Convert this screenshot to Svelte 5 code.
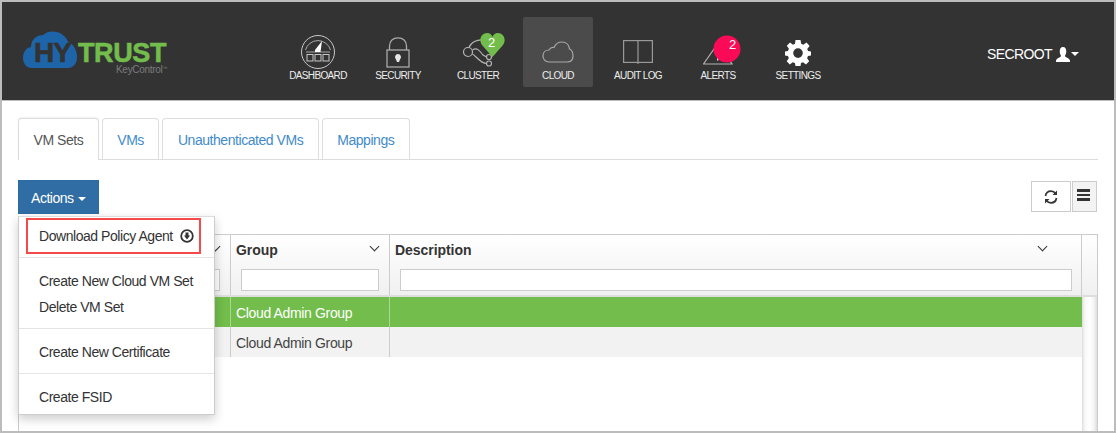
<script lang="ts">
  const navItems = [
    { id: 'dashboard', label: 'DASHBOARD' },
    { id: 'security', label: 'SECURITY' },
    { id: 'cluster', label: 'CLUSTER' },
    { id: 'cloud', label: 'CLOUD' },
    { id: 'audit', label: 'AUDIT LOG' },
    { id: 'alerts', label: 'ALERTS' },
    { id: 'settings', label: 'SETTINGS' }
  ];
  const tabs = ['VM Sets', 'VMs', 'Unauthenticated VMs', 'Mappings'];
  const rows = [
    { group: 'Cloud Admin Group', selected: true },
    { group: 'Cloud Admin Group', selected: false }
  ];
</script>

<div class="frame">
  <header class="top">
    <div class="logo">
      <svg class="cloud" width="55" height="38" viewBox="0 0 55 38" aria-hidden="true">
        <path d="M9 37C3 37 0 32 0 27C0 21 3 17 8 16C8 8 14 4 20 4C24 0 30 0 34 1C40 3 44 7 45 11C51 13 54 20 54 26C54 33 50 37 45 37Z" fill="#1e64a8" />
      </svg>
      <span class="hy">HY</span>
      <span class="trust">TRUST</span>
      <span class="key">KeyControl<sup>™</sup></span>
    </div>

    <nav class="nav">
      {#each navItems as item}
        <div class="nav-item" class:active={item.id === 'cloud'}>
          <div class="nav-icon">
            {#if item.id === 'dashboard'}
              <svg class="i-dashboard" width="34" height="34" viewBox="0 0 34 34" fill="none" stroke="#c8c8c8">
                <circle cx="17" cy="17" r="16.500" />
                <path d="M5 17H29" stroke-width="0.8" />
                <path d="M4.500 15A13 13 0 0 1 29.500 15" stroke-width="0.8" />
                <path d="M14 15L21 6L19.500 17H14Z" fill="#fff" stroke="none" />
                <rect x="6" y="19.500" width="6" height="6.500" />
                <rect x="14" y="19.500" width="6" height="6.500" />
                <rect x="22" y="19.500" width="6" height="6.500" />
              </svg>
            {:else if item.id === 'security'}
              <svg class="i-security" width="24" height="31" viewBox="0 0 24 31" fill="none" stroke="#aaa" stroke-width="1.300">
                <path d="M3.500 13V9C3.500 4 7 0.800 12 0.800C17 0.800 20.500 4 20.500 9V13" />
                <rect x="1" y="13" width="22" height="17" />
                <path d="M12 17A3.200 3.200 0 0 1 14 22.500L13 25H11L10 22.500A3.200 3.200 0 0 1 12 17Z" fill="#e6e6e6" stroke="none" />
              </svg>
            {:else if item.id === 'cluster'}
              <svg class="i-cluster" width="42" height="35" viewBox="0 0 42 35" fill="none" stroke="#b4b4b4" stroke-width="1.200">
                <circle cx="5" cy="19" r="4.500" />
                <path d="M6 14.500C8 9 14 6.500 20 7M9.500 17C14 14 17 18 20 22L23.500 24M9.500 21C13 23 17 30 23.500 30.500" />
                <circle cx="26" cy="24" r="2.500" />
                <circle cx="26" cy="30.500" r="2.500" />
                <path d="M29.500 24L19 12C15 6 19 0 24 0C27 0 29 2 29.500 4C30 2 32 0 35 0C40 0 44 6 40 12Z" fill="#72bd4b" stroke="none" />
              </svg>
              <span class="count heart-count">2</span>
            {:else if item.id === 'cloud'}
              <svg class="i-cloud" width="32" height="22" viewBox="0 0 32 22" fill="none" stroke="#a8a8a8" stroke-width="1.200">
                <path d="M7 21C3 21 1 18 1 15C1 11 4 9 7 9C8.500 6.500 10.500 6 12 6.500C13.500 3 16.500 1 20 1C24 1 27 4 27.500 8C30 9 31 12 31 15C31 18.500 29 21 25 21Z" />
              </svg>
            {:else if item.id === 'audit'}
              <svg class="i-audit" width="30" height="24" viewBox="0 0 30 24" fill="none" stroke="#999" stroke-width="1.200">
                <rect x="0.600" y="0.600" width="28.800" height="21.800" />
                <path d="M15 0.600V24" />
              </svg>
            {:else if item.id === 'alerts'}
              <svg class="i-alerts" width="38" height="30" viewBox="0 0 38 30" fill="none">
                <path d="M0.500 29L14.500 9L29 29Z" stroke="#b4b4b4" stroke-width="1.200" />
                <rect x="14" y="23" width="1.500" height="2.500" fill="#ddd" />
                <circle cx="24" cy="14" r="13.500" fill="#fb0a57" />
              </svg>
              <span class="count alert-count">2</span>
            {:else}
              <svg class="i-settings" width="26" height="26" viewBox="0 0 26 26">
                <path fill="#fff" fill-rule="evenodd" d="M10.500 0H15.500L16.200 3.800L18.300 4.700L21.500 2.500L24.600 5.900L22.200 8.900L23.100 11L26 11.500V15.500L23 16.100L22.100 18.200L24.200 21.300L21 24.400L18 22.300L16 23.100L15.500 26H10.500L9.900 23.100L7.800 22.200L4.800 24.400L1.700 21.200L3.800 18.200L3 16L0 15.500V11.500L3 10.900L3.900 8.800L1.800 5.700L5 2.500L8 4.700L10 3.800ZM13 8.300A4.800 4.800 0 1 0 13 17.900A4.800 4.800 0 1 0 13 8.300Z" />
              </svg>
            {/if}
          </div>
          <span class="nav-label">{item.label}</span>
        </div>
      {/each}
    </nav>

    <div class="user">
      <span>SECROOT</span>
      <svg width="14" height="15" viewBox="0 0 15 15" preserveAspectRatio="none" aria-hidden="true">
        <path fill="#fff" d="M7.500 0C10 0 11 2 11 4.500C11 6.500 10 8 9.500 9C10 10.500 15 11 15 14V15H0V14C0 11 5 10.500 5.500 9C5 8 4 6.500 4 4.500C4 2 5 0 7.500 0Z" />
      </svg>
      <span class="caret white"></span>
    </div>
  </header>

  <main class="content">
    <div class="tabs">
      {#each tabs as tab, i}
        <div class="tab" class:current={i === 0}>{tab}</div>
      {/each}
    </div>

    <div class="toolbar">
      <button class="actions">Actions <span class="caret white"></span></button>
      <div class="tools">
        <button class="refresh" aria-label="Refresh">
          <svg width="14" height="14" viewBox="0 0 14 14" fill="none" stroke="#333" stroke-width="1.700">
            <path d="M1.500 6C2 3 4.500 1.200 7 1.200C9 1.200 10.500 2 11.500 3.500" />
            <path d="M12.500 8C12 11 9.500 12.800 7 12.800C5 12.800 3.500 12 2.500 10.500" />
            <path d="M13 0.500V5H8.500Z" fill="#333" stroke="none" />
            <path d="M1 13.500V9H5.500Z" fill="#333" stroke="none" />
          </svg>
        </button>
        <button class="menu" aria-label="Columns">
          <span></span><span></span><span></span>
        </button>
      </div>
    </div>

    <div class="table-wrap">
      <div class="table">
        <div class="head-row">
          <div class="col first">
            <div class="col-title"><span>Name</span><span class="chev"></span></div>
            <div class="filter"></div>
          </div>
          <div class="col group">
            <div class="col-title"><span>Group</span><span class="chev"></span></div>
            <div class="filter"></div>
          </div>
          <div class="col desc">
            <div class="col-title"><span>Description</span><span class="chev"></span></div>
            <div class="filter"></div>
          </div>
          <div class="col end"></div>
        </div>
        {#each rows as row}
          <div class="row" class:selected={row.selected}>
            <div class="cell first"></div>
            <div class="cell group">{row.group}</div>
            <div class="cell desc"></div>
          </div>
        {/each}
        <div class="scroll-track"></div>
      </div>

      <div class="dropdown">
        <div class="drop-group first-group">
          <div class="highlight">
            <span>Download Policy Agent</span>
            <svg width="14" height="14" viewBox="0 0 14 14" aria-hidden="true">
              <circle cx="7" cy="7" r="5.800" fill="none" stroke="#333" stroke-width="1.800" />
              <path d="M5.500 3.500H8.500V6.500H10L7 10.500L4 6.500H5.500Z" fill="#333" />
            </svg>
          </div>
        </div>
        <div class="drop-group">
          <div class="drop-item">Create New Cloud VM Set</div>
          <div class="drop-item">Delete VM Set</div>
        </div>
        <div class="drop-group">
          <div class="drop-item">Create New Certificate</div>
        </div>
        <div class="drop-group last">
          <div class="drop-item">Create FSID</div>
        </div>
      </div>
    </div>
  </main>
</div>

<style>
  :global(body) {
    margin: 0;
    background: #fff;
  }

  .frame {
    box-sizing: border-box;
    width: 1116px;
    height: 433px;
    border: 2px solid #bcbcbc;
    overflow: hidden;
    display: flex;
    flex-direction: column;
    font-family: 'Liberation Sans', Arial, sans-serif;
    color: #333;
    letter-spacing: -0.45px;
  }

  .top {
    height: 98px;
    flex: none;
    background: #333;
    display: flex;
    align-items: flex-start;
    position: relative;
  }

  .logo {
    position: relative;
    width: 281px;
    height: 98px;
    flex: none;
  }

  .cloud {
    position: absolute;
    left: 21px;
    top: 29px;
  }

  .hy {
    position: absolute;
    left: 32px;
    top: 41px;
    font-size: 28px;
    line-height: 20px;
    font-weight: 700;
    color: #333;
    letter-spacing: -1px;
    -webkit-text-stroke: 0.6px #333;
  }

  .trust {
    position: absolute;
    left: 76px;
    top: 41px;
    font-size: 27px;
    line-height: 20px;
    font-weight: 700;
    color: #72bd4b;
    letter-spacing: -0.4px;
    -webkit-text-stroke: 0.6px #72bd4b;
  }

  .key {
    position: absolute;
    left: 114px;
    top: 61px;
    font-size: 10px;
    line-height: 14px;
    color: #7c7c7c;
    letter-spacing: -0.3px;
  }

  .key sup {
    font-size: 5px;
    vertical-align: 3px;
    line-height: 0;
  }

  .nav {
    display: flex;
    gap: 10px;
    margin-top: 15px;
  }

  .nav-item {
    width: 70px;
    height: 70px;
    border-radius: 2px;
    display: flex;
    flex-direction: column;
    align-items: center;
  }

  .nav-item.active {
    background: #4b4b4b;
  }

  .nav-icon {
    height: 50px;
    width: 100%;
    position: relative;
    display: flex;
    align-items: flex-start;
    justify-content: center;
  }

  .i-dashboard {
    margin-top: 18px;
  }

  .i-security {
    margin-top: 20px;
  }

  .i-cluster {
    margin: 16px 0 0 12px;
  }

  .i-cloud {
    margin-top: 24px;
  }

  .i-audit {
    margin-top: 23px;
  }

  .i-alerts {
    margin: 18px 0 0 8px;
  }

  .i-settings {
    margin-top: 23px;
  }

  .nav-label {
    margin-top: 3px;
    font-size: 10px;
    line-height: 12px;
    color: #eee;
    letter-spacing: -0.65px;
    white-space: nowrap;
  }

  .count {
    position: absolute;
    color: #fff;
    font-size: 13px;
    line-height: 14px;
  }

  .heart-count {
    left: 45px;
    top: 19px;
  }

  .alert-count {
    left: 46px;
    top: 21px;
  }

  .user {
    position: absolute;
    right: 35px;
    top: 44px;
    display: flex;
    align-items: center;
    gap: 4px;
    color: #fff;
    font-size: 14px;
    line-height: 16px;
    letter-spacing: -0.6px;
  }

  .caret {
    display: inline-block;
    width: 0;
    height: 0;
    border-left: 4px solid transparent;
    border-right: 4px solid transparent;
    border-top: 4px solid #333;
  }

  .caret.white {
    border-top-color: #fff;
  }

  .user .caret {
    margin-left: -3px;
  }

  .content {
    flex: 1;
    min-height: 0;
    padding: 17px 16px 0;
    border-top: 1px solid #bcbcbc;
    display: flex;
    flex-direction: column;
  }

  .tabs {
    height: 42px;
    flex: none;
    display: flex;
    gap: 3px;
    border-bottom: 1px solid #ddd;
    box-sizing: border-box;
  }

  .tab {
    box-sizing: border-box;
    height: 41px;
    padding: 13px 14.500px 0;
    border: 1px solid #ddd;
    border-bottom: 0;
    border-radius: 4px 4px 0 0;
    font-size: 14px;
    line-height: 17px;
    color: #428bca;
  }

  .tab.current {
    color: #555;
    background: #fff;
    height: 42px;
    box-shadow: 0 -1px 2px rgba(0, 0, 0, 0.06);
  }

  .toolbar {
    height: 34px;
    margin-top: 20px;
    display: flex;
    justify-content: space-between;
    flex: none;
  }

  .actions {
    width: 81px;
    height: 34px;
    padding: 1px 0 0;
    border: 1px solid #2d6ca2;
    background: #2f6da4;
    color: #fff;
    font: inherit;
    font-size: 14px;
    letter-spacing: -0.5px;
    border-radius: 0;
  }

  .actions .caret {
    vertical-align: 2px;
    margin-left: 1px;
  }

  .tools {
    display: flex;
    gap: 1px;
    margin-right: 1px;
    padding-top: 1px;
  }

  .refresh {
    width: 40px;
    height: 31px;
    padding: 3px 0 0;
    border: 1px solid #ccc;
    background: #fff;
  }

  .menu {
    width: 25px;
    height: 31px;
    padding: 7px 0 0 4px;
    border: 1px solid #ccc;
    background: #f3f3f3;
    display: flex;
    flex-direction: column;
    gap: 2px;
    align-items: flex-start;
  }

  .menu span {
    width: 13px;
    height: 2.500px;
    background: #333;
  }

  .table-wrap {
    position: relative;
    flex: 1;
    margin-top: 20px;
    min-height: 0;
  }

  .table {
    box-sizing: border-box;
    width: 1080px;
    height: 220px;
    border: 1px solid #ccc;
    position: relative;
  }

  .head-row {
    display: flex;
    height: 62px;
    border-bottom: 2px solid #ddd;
    background: linear-gradient(#fff, #f0f0f0);
    box-sizing: border-box;
  }

  .col {
    box-sizing: border-box;
    border-right: 1px solid #ccc;
    padding: 5px 10px 0;
  }

  .first {
    width: 212px;
    flex: none;
  }

  .group {
    width: 159px;
    flex: none;
  }

  .desc {
    width: 692px;
    flex: none;
  }

  .col.desc {
    padding-right: 9px;
  }

  .col.end {
    flex: 1;
    border-right: 0;
    padding: 0;
  }

  .col-title {
    display: flex;
    justify-content: space-between;
    height: 24px;
    font-size: 14px;
    line-height: 20px;
    font-weight: 700;
    color: #333;
    margin-left: -5px;
    letter-spacing: -0.05px;
  }

  .desc .col-title {
    padding-right: 25px;
  }

  .chev {
    box-sizing: border-box;
    width: 7px;
    height: 7px;
    margin: 3px 1px 0 0;
    border-right: 1.500px solid #333;
    border-bottom: 1.500px solid #333;
    transform: rotate(45deg);
  }

  .filter {
    box-sizing: border-box;
    height: 22px;
    margin-top: 5px;
    border: 1px solid #ccc;
    background: #fff;
  }

  .row {
    display: flex;
    height: 30px;
    background: #f2f2f2;
    width: 1063px;
  }

  .row.selected {
    background: #72bd4b;
  }

  .cell {
    box-sizing: border-box;
    border-right: 1px solid #ccc;
    padding-left: 5px;
    font-size: 14px;
    line-height: 32px;
    color: #444;
    letter-spacing: -0.35px;
  }

  .cell.desc {
    border-right: 0;
  }

  .row.selected .cell {
    color: #fff;
    border-right-color: #a9d88f;
  }

  .scroll-track {
    position: absolute;
    left: 1063px;
    top: 62px;
    bottom: 0;
    width: 15px;
    background: linear-gradient(90deg, #ddd, #f8f8f8 20%, #fff 50%, #f4f4f4 80%, #ddd);
  }

  .dropdown {
    position: absolute;
    left: 0;
    top: -18px;
    box-sizing: border-box;
    width: 197px;
    background: #fff;
    border: 1px solid #ccc;
    border-top-color: #ddd;
    box-shadow: 0 4px 10px rgba(0, 0, 0, 0.2);
  }

  .drop-group {
    padding: 10px 0 8px;
    border-top: 1px solid #e5e5e5;
  }

  .drop-group.first-group {
    border-top: 0;
    padding: 1px 0 3px 7px;
  }

  .drop-group.last {
    padding-bottom: 4px;
  }

  .highlight {
    box-sizing: border-box;
    width: 175px;
    height: 36px;
    border: 2px solid #f44a4a;
    padding: 0 5px 0 11px;
    display: flex;
    align-items: center;
    justify-content: space-between;
    font-size: 14px;
    color: #333;
  }

  .drop-item {
    padding-left: 20px;
    height: 26px;
    font-size: 14px;
    line-height: 26px;
    color: #333;
    white-space: nowrap;
  }
</style>
